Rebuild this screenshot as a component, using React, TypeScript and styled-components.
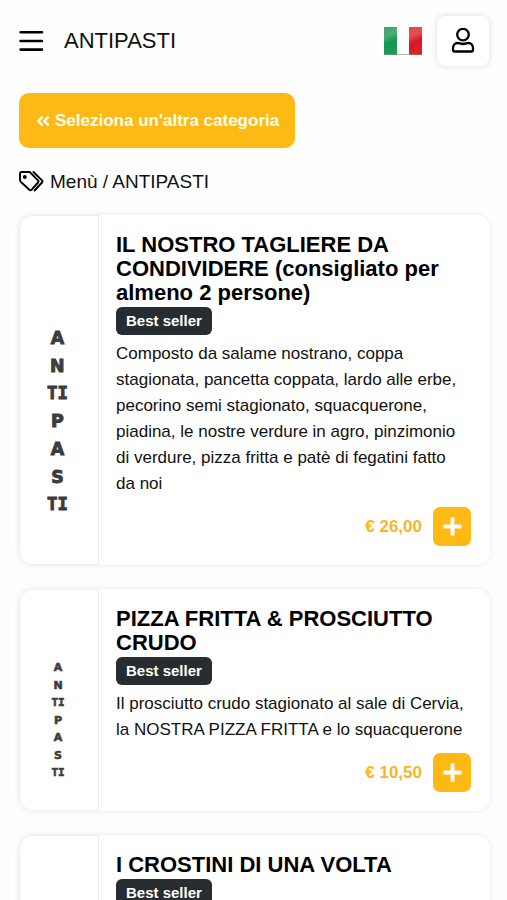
import React from "react";
import styled, { createGlobalStyle } from "styled-components";
import { FaAngleDoubleLeft, FaPlus } from "react-icons/fa";

const GlobalStyle = createGlobalStyle`
  * { box-sizing: border-box; }
  body {
    margin: 0;
    background: #fefefe;
    color: #111;
    font-family: "Liberation Sans", Arial, sans-serif;
  }
  button { font-family: inherit; cursor: pointer; }
`;

const Page = styled.div`
  padding: 15px 17px 24px 19px;
`;

const Header = styled.header`
  display: flex;
  align-items: center;
  height: 52px;
`;

const IconButton = styled.button`
  display: flex;
  padding: 0;
  border: 0;
  background: none;
`;

const HeaderTitle = styled.h1`
  flex: 1;
  margin: 0 0 0 20px;
  font-size: 22px;
  line-height: 26px;
  font-weight: 400;
`;

const UserButton = styled(IconButton)`
  align-items: center;
  justify-content: center;
  width: 52px;
  height: 50px;
  margin: 0 1px 0 15px;
  border-radius: 8px;
  background: #fff;
  color: #000;
  box-shadow: 0 0 6px rgba(0, 0, 0, 0.15);
`;

const BackLink = styled.a`
  display: inline-flex;
  align-items: center;
  gap: 4px;
  height: 55px;
  margin-top: 26px;
  padding: 0 16px;
  border-radius: 10px;
  background: #ffb915;
  color: #fffdf0;
  font-size: 17px;
  font-weight: 700;
  text-decoration: none;
`;

const Breadcrumb = styled.nav`
  display: flex;
  align-items: center;
  gap: 6px;
  margin: 21px 0;
  font-size: 19px;
  line-height: 25px;

  a { color: inherit; text-decoration: none; }
`;

const CardList = styled.main`
  display: flex;
  flex-direction: column;
  gap: 24px;
`;

const Card = styled.article`
  display: flex;
  min-height: 222px;
  border-radius: 14px;
  background: #fff;
  overflow: hidden;
  box-shadow: 0 0 6px rgba(0, 0, 0, 0.09);
`;

const Thumbnail = styled.svg`
  flex: none;
  width: 80px;
  border: 1px solid #ececec;
  border-radius: 14px 0 0 14px;
`;

const CardBody = styled.div`
  flex: 1;
  display: flex;
  flex-direction: column;
  align-items: flex-start;
  padding: 18px 19px 19px 17px;
`;

const DishName = styled.h2`
  margin: 0;
  font-size: 22px;
  line-height: 24px;
  color: #000;
`;

const Badge = styled.span`
  margin-top: 2px;
  padding: 0 10px;
  border-radius: 6px;
  background: #272c30;
  color: #fff;
  font-size: 15px;
  line-height: 28px;
  font-weight: 700;
`;

const Description = styled.p`
  margin: 6px 0 10px;
  padding-right: 4px;
  font-size: 17px;
  line-height: 26px;
`;

const PriceRow = styled.div`
  display: flex;
  align-items: center;
  gap: 11px;
  margin-top: auto;
  align-self: flex-end;
`;

const Price = styled.span`
  color: #fcb426;
  font-size: 17px;
  font-weight: 700;
`;

const AddButton = styled(IconButton)`
  align-items: center;
  justify-content: center;
  width: 38px;
  height: 39px;
  border-radius: 7px;
  background: #ffb915;
  color: #fff;
`;

const LETTERS = ["A", "N", "TI", "P", "A", "S", "TI"];

function CategoryPicture() {
  return (
    <Thumbnail viewBox="0 0 78 220" preserveAspectRatio="xMidYMid slice" role="img" aria-label="Antipasti">
      <g fill="#3c3c3c" stroke="#3c3c3c" strokeWidth="0.6" fontWeight="700" fontSize="11" textAnchor="middle">
        {LETTERS.map((letter, index) => (
          <text
            key={index}
            x="38"
            y={81 + index * 17.5}
            fontFamily={letter === "TI" ? "DejaVu Sans Mono, monospace" : "DejaVu Sans, sans-serif"}
          >
            {letter}
          </text>
        ))}
      </g>
    </Thumbnail>
  );
}

function MenuIcon() {
  return (
    <svg width="25" height="24" viewBox="0 0 25 24" stroke="#000" strokeWidth="2.6" strokeLinecap="round">
      <path d="M1.600 3.200H23M1.600 12H23M1.600 20.600H23" />
    </svg>
  );
}

function UserIcon() {
  return (
    <svg width="24" height="26" viewBox="0 0 24 26" fill="none" stroke="currentColor" strokeWidth="2.3" strokeLinejoin="round">
      <circle cx="12" cy="6.600" r="5.800" />
      <path d="M6.500 15C3.800 15 2 17.300 2 20V21.800Q2 23.500 3.700 23.500H20.300Q22 23.500 22 21.800V20C22 17.300 20.200 15 17.500 15C15.500 15 14.500 16 12 16S8.500 15 6.500 15Z" />
    </svg>
  );
}

function TagsIcon() {
  return (
    <svg width="25" height="21" viewBox="0 0 25 21" fill="none" stroke="#000" strokeWidth="1.9" strokeLinejoin="round" strokeLinecap="round">
      <path d="M2.500 1H10.700L19 9.300Q20 10.400 19 11.500L12.700 18.600Q11.500 19.800 10.300 18.700L1.700 10.700Q1 10 1 9V2.500Q1 1 2.500 1Z" />
      <path d="M14.500 1L23 9.400Q24 10.400 23 11.500L15.600 19.500" />
      <circle cx="5.800" cy="6" r="1" fill="#000" />
    </svg>
  );
}

function ItalianFlag() {
  return (
    <svg width="38" height="28" viewBox="0 0 38 28">
      <defs>
        <linearGradient id="flagGreen" x1="0" y1="0" x2="0.2" y2="1">
          <stop offset="0" stopColor="#479f70" />
          <stop offset="0.350" stopColor="#4aae7a" />
          <stop offset="0.600" stopColor="#159653" />
          <stop offset="1" stopColor="#1d9958" />
        </linearGradient>
        <linearGradient id="flagRed" x1="0" y1="0" x2="0.2" y2="1">
          <stop offset="0" stopColor="#dc4950" />
          <stop offset="0.350" stopColor="#e24e55" />
          <stop offset="0.600" stopColor="#db1620" />
          <stop offset="1" stopColor="#df2029" />
        </linearGradient>
      </defs>
      <path d="M0 0H38V28H0Z" fill="#fdfdfd" />
      <path d="M0 0H13V28H0Z" fill="url(#flagGreen)" />
      <path d="M25 0H38V28H25Z" fill="url(#flagRed)" />
      <path d="M0 27.500H38" stroke="#8a8a8a" strokeOpacity="0.600" />
    </svg>
  );
}

interface Dish {
  name: string;
  description?: string;
  price?: string;
}

const DISHES: Dish[] = [
  {
    name: "IL NOSTRO TAGLIERE DA CONDIVIDERE (consigliato per almeno 2 persone)",
    description:
      "Composto da salame nostrano, coppa stagionata, pancetta coppata, lardo alle erbe, pecorino semi stagionato, squacquerone, piadina, le nostre verdure in agro, pinzimonio di verdure, pizza fritta e patè di fegatini fatto da noi",
    price: "€ 26,00",
  },
  {
    name: "PIZZA FRITTA & PROSCIUTTO CRUDO",
    description: "Il prosciutto crudo stagionato al sale di Cervia, la NOSTRA PIZZA FRITTA e lo squacquerone",
    price: "€ 10,50",
  },
  { name: "I CROSTINI DI UNA VOLTA" },
];

function DishCard({ name, description, price }: Dish) {
  return (
    <Card>
      <CategoryPicture />
      <CardBody>
        <DishName>{name}</DishName>
        <Badge>Best seller</Badge>
        {description && <Description>{description}</Description>}
        {price && (
          <PriceRow>
            <Price>{price}</Price>
            <AddButton type="button" aria-label={`Aggiungi ${name}`}>
              <FaPlus size={21} />
            </AddButton>
          </PriceRow>
        )}
      </CardBody>
    </Card>
  );
}

export default function App() {
  return (
    <>
      <GlobalStyle />
      <Page>
        <Header>
          <IconButton type="button" aria-label="Apri menù">
            <MenuIcon />
          </IconButton>
          <HeaderTitle>ANTIPASTI</HeaderTitle>
          <IconButton type="button" aria-label="Lingua: italiano">
            <ItalianFlag />
          </IconButton>
          <UserButton type="button" aria-label="Profilo">
            <UserIcon />
          </UserButton>
        </Header>
        <BackLink href="#categorie">
          <FaAngleDoubleLeft size={16} />
          Seleziona un'altra categoria
        </BackLink>
        <Breadcrumb aria-label="Percorso">
          <TagsIcon />
          <span>
            <a href="#menu">Menù</a> / ANTIPASTI
          </span>
        </Breadcrumb>
        <CardList>
          {DISHES.map((dish) => (
            <DishCard key={dish.name} {...dish} />
          ))}
        </CardList>
      </Page>
    </>
  );
}
